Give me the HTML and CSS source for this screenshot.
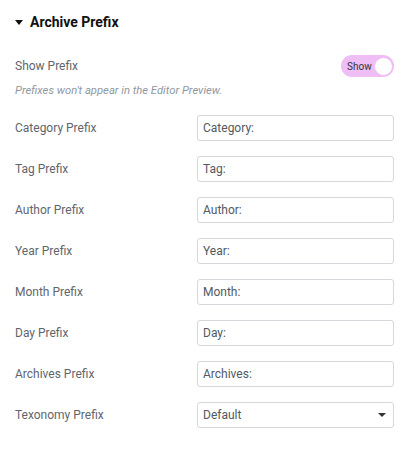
FILE: index.html
```html
<!DOCTYPE html>
<html>
<head>
<meta charset="utf-8">
<link rel="stylesheet" href="styles.css">
</head>
<body>
<div class="panel">
  <div class="section-head">
    <span class="caret"></span>
    <span class="section-title">Archive Prefix</span>
  </div>
  <div class="switch-row">
    <span class="label">Show Prefix</span>
    <span class="switch"><span class="switch-text">Show</span><span class="knob"></span></span>
  </div>
  <p class="note">Prefixes won't appear in the Editor Preview.</p>
  <div class="fields">
    <div class="field"><span class="label">Category Prefix</span><div class="input">Category:</div></div>
    <div class="field"><span class="label">Tag Prefix</span><div class="input">Tag:</div></div>
    <div class="field"><span class="label">Author Prefix</span><div class="input">Author:</div></div>
    <div class="field"><span class="label">Year Prefix</span><div class="input">Year:</div></div>
    <div class="field"><span class="label">Month Prefix</span><div class="input">Month:</div></div>
    <div class="field"><span class="label">Day Prefix</span><div class="input">Day:</div></div>
    <div class="field"><span class="label">Archives Prefix</span><div class="input">Archives:</div></div>
    <div class="field"><span class="label">Texonomy Prefix</span><div class="input select">Default<span class="arrow"></span></div></div>
  </div>
</div>
</body>
</html>
```
FILE: styles.css
```css
html, body {
  margin: 0;
  padding: 0;
  background: #fff;
}
body {
  font-family: Roboto, "Liberation Sans", sans-serif;
  color: #495157;
}
.panel {
  padding: 0 14px 0 15px;
}
.section-head {
  height: 44px;
  display: flex;
  align-items: center;
  gap: 7px;
}
.caret {
  width: 0;
  height: 0;
  border-left: 4px solid transparent;
  border-right: 4px solid transparent;
  border-top: 5px solid #111;
}
.section-title {
  font-size: 14px;
  font-weight: 700;
  color: #111;
}
.switch-row {
  margin-top: 11px;
  height: 22px;
  display: flex;
  align-items: center;
  justify-content: space-between;
}
.label {
  font-size: 12px;
  color: #5f666d;
}
.switch {
  width: 53px;
  height: 22px;
  box-sizing: border-box;
  border-radius: 11px;
  background: #efbef5;
  display: flex;
  align-items: center;
  justify-content: space-between;
  padding: 0 1px 0 6px;
}
.switch-text {
  font-size: 10px;
  color: #333;
}
.knob {
  width: 19px;
  height: 19px;
  border-radius: 50%;
  background: #fff;
  border: 1px solid #efbef5;
  box-sizing: border-box;
}
.note {
  margin: 7px 0 0;
  font-size: 11.25px;
  line-height: 14px;
  font-style: italic;
  color: #8f98a0;
}
.fields {
  margin-top: 17px;
  display: flex;
  flex-direction: column;
  gap: 15px;
}
.field {
  display: flex;
  align-items: center;
  justify-content: space-between;
}
.input {
  width: 197px;
  height: 26px;
  box-sizing: border-box;
  border: 1px solid #d5d8dc;
  border-radius: 3px;
  padding: 0 5px;
  font-size: 12px;
  color: #515962;
  display: flex;
  align-items: center;
  justify-content: space-between;
}
.arrow {
  width: 0;
  height: 0;
  border-left: 4px solid transparent;
  border-right: 4px solid transparent;
  border-top: 4px solid #333;
  margin-right: 2px;
}
```
